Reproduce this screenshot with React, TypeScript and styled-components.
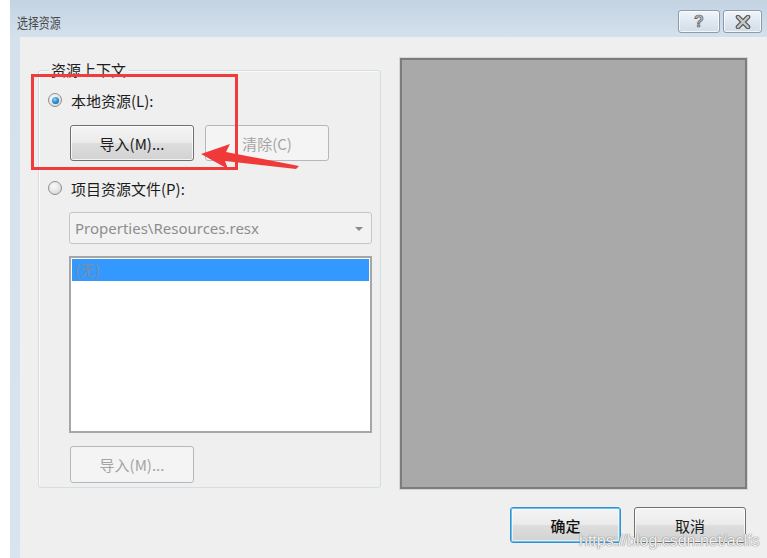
import React from "react";
import styled, { createGlobalStyle, css } from "styled-components";

const Global = createGlobalStyle`
  html, body { margin: 0; padding: 0; background: #fff; }
  body { font-family: "Noto Sans CJK SC", "Noto Sans", sans-serif; }
  * { box-sizing: border-box; }
`;

const Page = styled.div`
  position: relative;
  width: 767px;
  height: 558px;
  overflow: hidden;
  background: #fff;
  padding-left: 10px;
  display: flex;
`;

const Frame = styled.div`
  flex: 1;
  display: flex;
  flex-direction: column;
  background: linear-gradient(180deg, #c3d3e2 0px, #d4e1ed 37px, #d8e4f0 100%);
`;

const TitleBar = styled.div`
  height: 37px;
  display: flex;
  align-items: center;
  padding: 6px 5px 0 7px;
`;

const Title = styled.span`
  flex: 1;
  font-size: 14px;
  color: #4a4a4a;
  display: inline-block;
  transform: scaleX(0.78);
  transform-origin: left center;
  white-space: nowrap;
`;

const CaptionButtons = styled.div`
  display: flex;
  gap: 3px;
  align-self: flex-start;
  padding-top: 4px;
`;

const CaptionButton = styled.div<{ $w: number }>`
  width: ${(p) => p.$w}px;
  height: 23px;
  border: 1px solid #8c9aaa;
  border-radius: 3px;
  background: linear-gradient(180deg, #f1f5f9 0%, #dfe8f1 50%, #d2dde9 100%);
  box-shadow: inset 0 0 0 1px rgba(255, 255, 255, 0.7);
  display: flex;
  align-items: center;
  justify-content: center;
`;

const HelpGlyph = styled.span`
  font-family: "Liberation Sans", Arial, sans-serif;
  font-weight: bold;
  font-size: 16px;
  line-height: 1;
  color: #bdbdbd;
  -webkit-text-stroke: 0.7px #5a5a5a;
`;

const Content = styled.div`
  flex: 1;
  margin-left: 10px;
  background: #efefef;
  display: flex;
  flex-direction: column;
  padding: 21px 20px 0 18px;
`;

const MainRow = styled.div`
  display: flex;
  gap: 19px;
  height: 431px;
  align-items: flex-start;
`;

const Group = styled.div`
  position: relative;
  width: 343px;
  height: 418px;
  margin-top: 12px;
  border: 1px solid #d3dde4;
  border-radius: 3px;
  box-shadow: inset 1px 1px 0 #fafafa;
  padding: 20px 0 0 9px;
  display: flex;
  flex-direction: column;
  align-items: flex-start;
`;

const Legend = styled.span`
  position: absolute;
  top: -11px;
  left: 10px;
  padding: 0 2px;
  background: #efefef;
  font-size: 15px;
  line-height: 20px;
  color: #1e1e1e;
`;

const RadioRow = styled.label<{ $gap?: number }>`
  display: flex;
  align-items: center;
  gap: 9px;
  height: 18px;
  margin-top: ${(p) => p.$gap ?? 0}px;
  font-size: 15px;
  color: #1b1b1b;
  white-space: nowrap;
`;

const Radio = styled.span<{ $checked?: boolean }>`
  position: relative;
  width: 14px;
  height: 14px;
  border-radius: 50%;
  border: 1px solid #8e8f8f;
  background: radial-gradient(circle at 40% 35%, #fafafa 0%, #e4e4e4 55%, #c9c9c9 100%);
  ${(p) =>
    p.$checked &&
    css`
      &::after {
        content: "";
        position: absolute;
        left: 2.5px;
        top: 2.5px;
        width: 7px;
        height: 7px;
        border-radius: 50%;
        background: radial-gradient(circle at 40% 35%, #8fd6fb 0%, #2b8ed0 50%, #0e4f86 100%);
      }
    `}
`;

const ButtonRow = styled.div`
  display: flex;
  gap: 11px;
  margin: 16px 0 0 22px;
`;

const Button = styled.div<{ $w: number; $h?: number; $disabled?: boolean; $default?: boolean }>`
  width: ${(p) => p.$w}px;
  height: ${(p) => p.$h ?? 36}px;
  border: 1px solid #707070;
  border-radius: 3px;
  background: linear-gradient(180deg, #f4f4f4 0%, #ebebeb 48%, #dddddd 52%, #d2d2d2 100%);
  box-shadow: inset 0 0 0 1px rgba(255, 255, 255, 0.75);
  display: flex;
  align-items: center;
  justify-content: center;
  font-size: 15px;
  color: #1a1a1a;
  white-space: nowrap;
  ${(p) =>
    p.$disabled &&
    css`
      border-color: #b5b8ba;
      background: #f4f4f4;
      box-shadow: none;
      color: #a4a4a4;
    `}
  ${(p) =>
    p.$default &&
    css`
      border-color: #3c8fcf;
      box-shadow: inset 0 0 0 1px #5fc3f0, inset 0 0 0 2px rgba(255, 255, 255, 0.6);
      font-weight: 500;
      color: #111;
    `}
`;

const Combo = styled.div`
  position: relative;
  width: 303px;
  height: 32px;
  margin: 15px 0 0 21px;
  border: 1px solid #c6c6c6;
  border-radius: 3px;
  background: #f2f2f2;
  display: flex;
  align-items: center;
  padding-left: 5px;
  font-family: "Noto Sans", sans-serif;
  font-size: 15px;
  color: #8e8e8e;
  &::after {
    content: "";
    position: absolute;
    right: 8px;
    top: 14px;
    border-left: 4px solid transparent;
    border-right: 4px solid transparent;
    border-top: 4px solid #8a8a8a;
  }
`;

const ListBox = styled.div`
  width: 303px;
  height: 177px;
  margin: 12px 0 0 21px;
  border: 2px solid #a6a6a6;
  background: #fff;
  padding: 1px 1px;
`;

const ListItem = styled.div<{ $selected?: boolean }>`
  height: 22px;
  line-height: 22px;
  padding-left: 3px;
  font-size: 15px;
  color: #7c8da0;
  background: ${(p) => (p.$selected ? "#3399ff" : "transparent")};
`;

const BottomButton = styled.div`
  margin: 13px 0 0 22px;
`;

const Preview = styled.div`
  width: 347px;
  height: 431px;
  background: #a9a9a9;
  border: 2px solid #7c7c7c;
  box-shadow: 0 0 0 1px #d6d6d6;
`;

const Footer = styled.div`
  display: flex;
  justify-content: flex-end;
  gap: 13px;
  margin-top: 18px;
  padding-right: 1px;
`;

const RedBox = styled.div`
  position: absolute;
  left: 31px;
  top: 74px;
  width: 207px;
  height: 96px;
  border: 3px solid #f13c3c;
  pointer-events: none;
`;

const Overlay = styled.svg`
  position: absolute;
  left: 0;
  top: 0;
  pointer-events: none;
`;

const Watermark = styled.div`
  position: absolute;
  left: 579px;
  top: 533px;
  font-family: "Liberation Sans", Arial, sans-serif;
  font-size: 16px;
  line-height: 16px;
  color: rgba(255, 255, 255, 0.92);
  text-shadow: 0 0 1px #7a7a7a, 0 0 1px #7a7a7a;
  pointer-events: none;
  white-space: nowrap;
`;

export default function App() {
  return (
    <>
      <Global />
      <Page>
        <Frame>
          <TitleBar>
            <Title>选择资源</Title>
            <CaptionButtons>
              <CaptionButton $w={42}>
                <HelpGlyph>?</HelpGlyph>
              </CaptionButton>
              <CaptionButton $w={39}>
                <svg width="16" height="14" viewBox="0 0 16 14">
                  <path d="M3 2 L13 12 M13 2 L3 12" stroke="#5a5a5a" strokeWidth="4.6" strokeLinecap="round" />
                  <path d="M3 2 L13 12 M13 2 L3 12" stroke="#c8c8c8" strokeWidth="2.4" strokeLinecap="round" />
                </svg>
              </CaptionButton>
            </CaptionButtons>
          </TitleBar>
          <Content>
            <MainRow>
              <Group>
                <Legend>资源上下文</Legend>
                <RadioRow>
                  <Radio $checked />
                  本地资源(L):
                </RadioRow>
                <ButtonRow>
                  <Button $w={124}>导入(M)...</Button>
                  <Button $w={124} $disabled>
                    清除(C)
                  </Button>
                </ButtonRow>
                <RadioRow $gap={18}>
                  <Radio />
                  项目资源文件(P):
                </RadioRow>
                <Combo>Properties\Resources.resx</Combo>
                <ListBox>
                  <ListItem $selected>(无)</ListItem>
                </ListBox>
                <BottomButton>
                  <Button $w={124} $h={37} $disabled>
                    导入(M)...
                  </Button>
                </BottomButton>
              </Group>
              <Preview />
            </MainRow>
            <Footer>
              <Button $w={111} $default>
                确定
              </Button>
              <Button $w={112}>取消</Button>
            </Footer>
          </Content>
        </Frame>
        <RedBox />
        <Overlay width="767" height="558" viewBox="0 0 767 558">
          <polygon
            points="201,154 230,144 226,152 299,166 296,169 225,161 228,169"
            fill="#f03a3a"
          />
        </Overlay>
        <Watermark>https://blog.csdn.net/aclfs</Watermark>
      </Page>
    </>
  );
}
